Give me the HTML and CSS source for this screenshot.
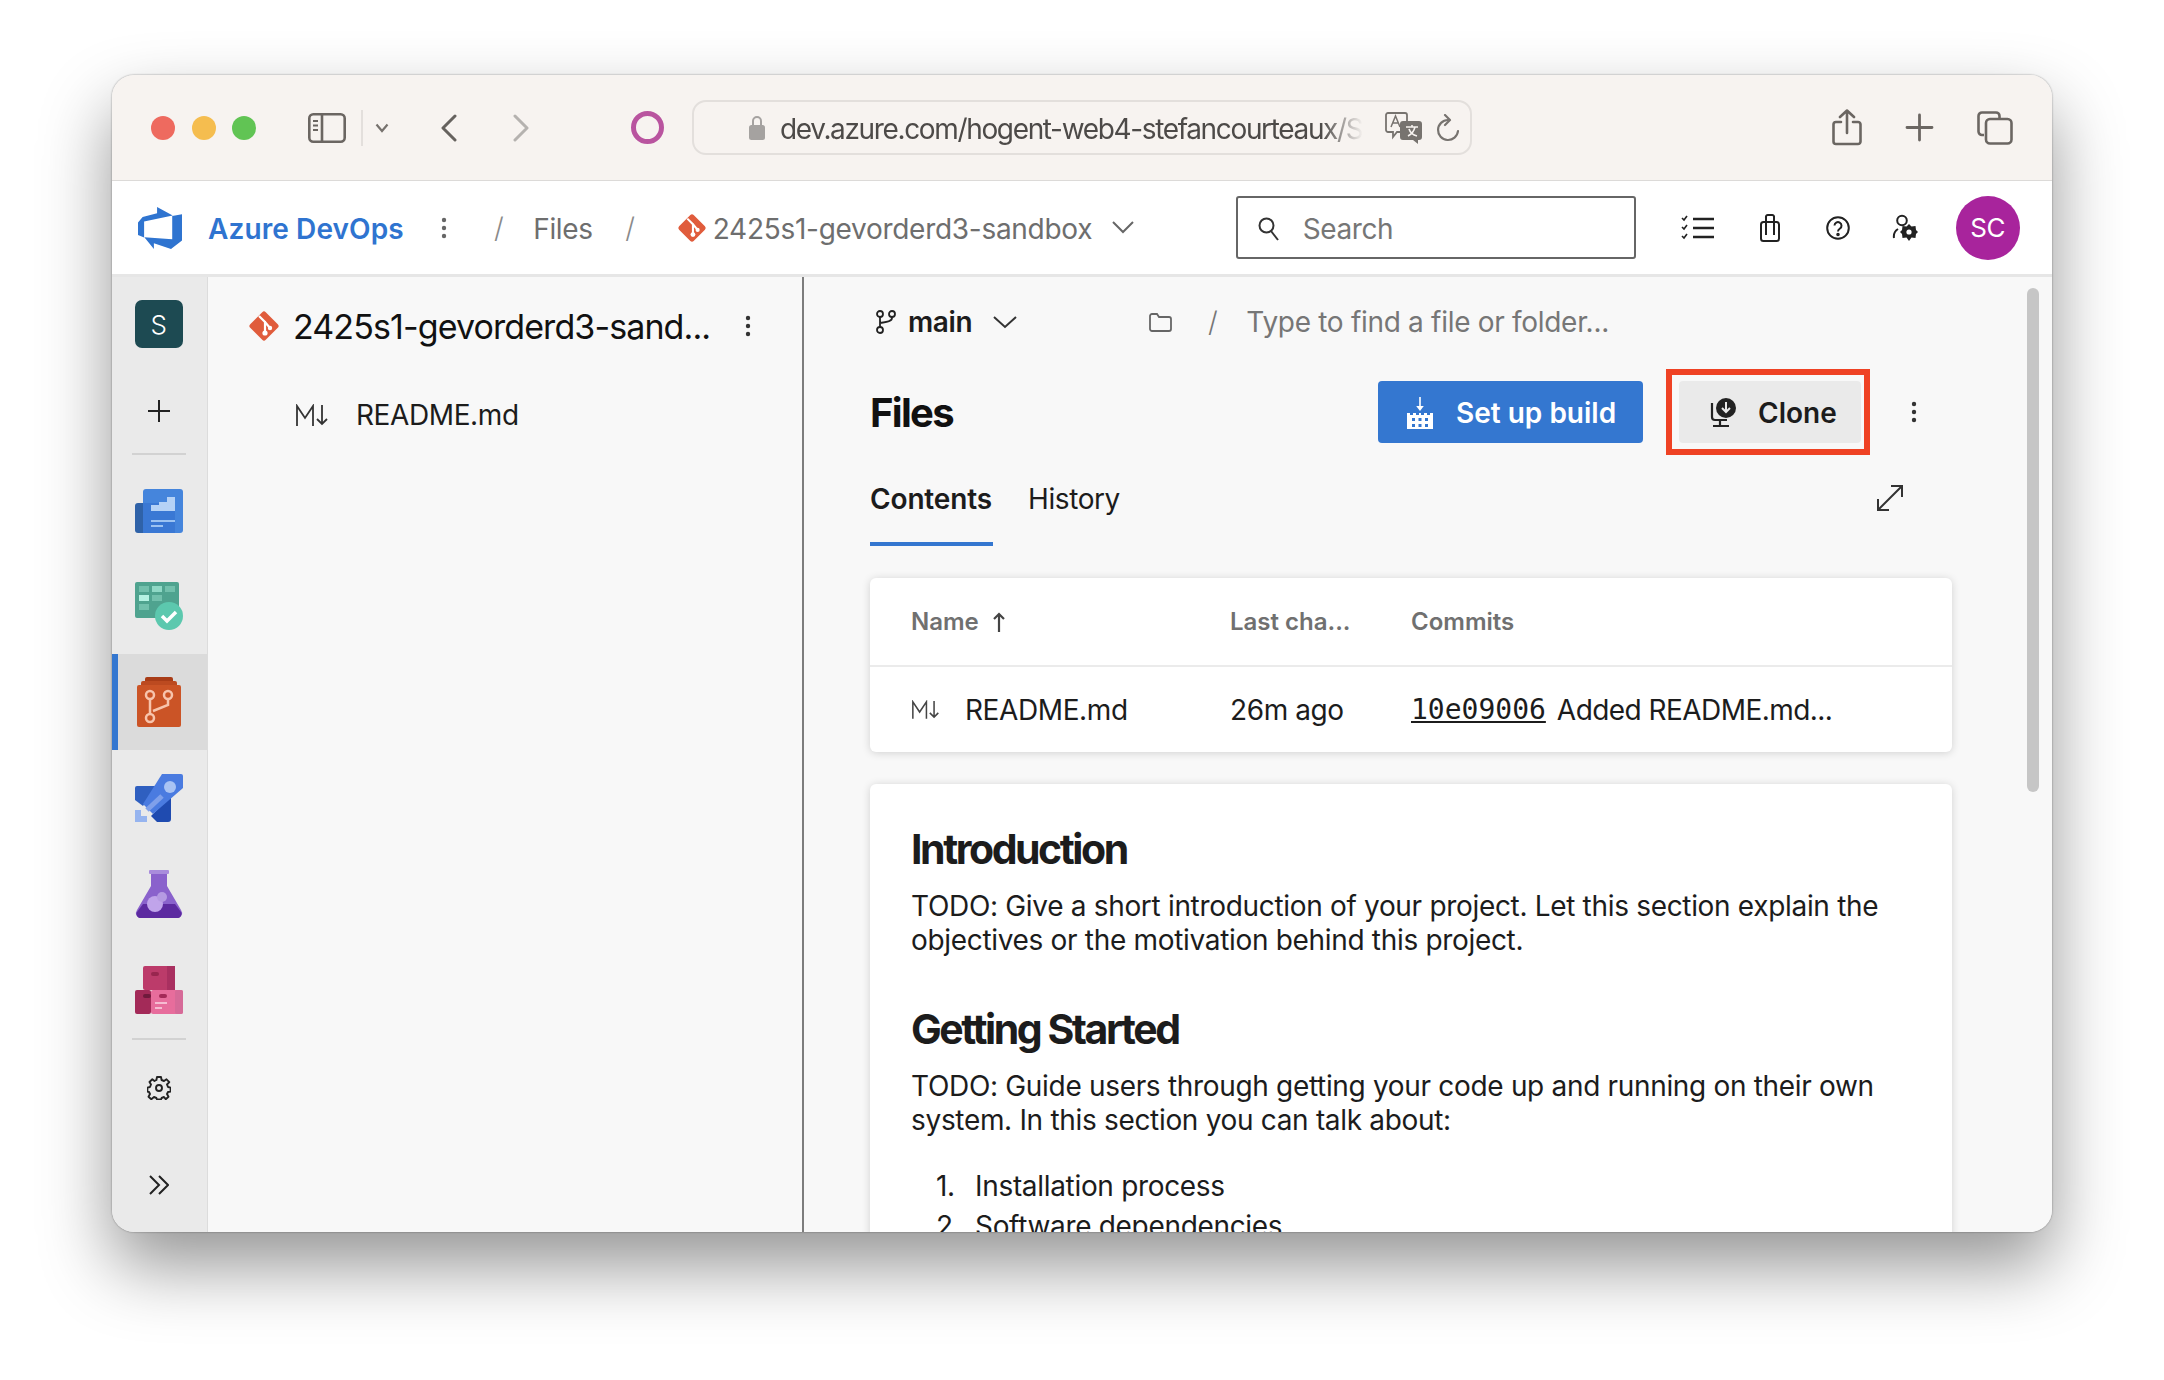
FILE: index.html
```html
<!DOCTYPE html>
<html>
  <head>
    <title>Files - Repos</title>
    <link rel="stylesheet" href="styles.css">
  </head>
  <body>
    <div class="window">
      <div class="toolbar">
        <div class="lights">
          <span class="light red"></span>
          <span class="light yellow"></span>
          <span class="light green"></span>
        </div>
        <svg class="t-sidebar" width="38" height="30" viewBox="0 0 38 30" fill="none" stroke="#6b6662" stroke-width="2.6"><rect x="1.3" y="1.3" width="35.4" height="27.4" rx="4"/><path d="M14 1.3v27.4"/><path d="M5 8h5M5 12.5h5M5 17h5" stroke-width="2"/></svg>
        <span class="t-divider"></span>
        <svg class="t-chevron" width="14" height="10" viewBox="0 0 14 10" fill="none" stroke="#77726e" stroke-width="2.2"><path d="M1.5 1.5 7 8l5.5-6.5"/></svg>
        <svg class="t-back" width="16" height="28" viewBox="0 0 16 28" fill="none" stroke="#66625e" stroke-width="3" stroke-linecap="round" stroke-linejoin="round"><path d="M14 2 2 14l12 12"/></svg>
        <svg class="t-forward" width="16" height="28" viewBox="0 0 16 28" fill="none" stroke="#b5b2af" stroke-width="3" stroke-linecap="round" stroke-linejoin="round"><path d="m2 2 12 12L2 26"/></svg>
        <span class="t-ring"></span>
        <div class="address">
          <svg class="lock" width="16" height="25" viewBox="0 0 16 25"><path d="M4 11V6a4 4 0 0 1 8 0v5" fill="none" stroke="#a5a2a0" stroke-width="2"/><rect y="10" width="16" height="15" rx="2.5" fill="#a5a2a0"/></svg>
          <span class="url">dev.azure.com/hogent-web4-stefancourteaux/Sa</span>
          <svg class="translate" width="38" height="32" viewBox="0 0 38 32"><path d="M3 1h17a2 2 0 0 1 2 2v15a2 2 0 0 1-2 2h-8l-4 5v-5H3a2 2 0 0 1-2-2V3a2 2 0 0 1 2-2z" fill="#f7f3f0" stroke="#77736f" stroke-width="1.8"/><path d="m6 15 4.500-11L15 15M8 11h5" fill="none" stroke="#77736f" stroke-width="1.500"/><path d="M18 9h16a3 3 0 0 1 3 3v13a3 3 0 0 1-3 3h-1v4l-5-4h-10a3 3 0 0 1-3-3V12a3 3 0 0 1 3-3z" fill="#77736f"/><path d="M21 15h12M27 13v2M23 24c4-2 6-5 7-9M24 17c1 3 4 6 8 7" fill="none" stroke="#f7f3f0" stroke-width="1.6"/></svg>
          <svg class="reload" width="24" height="28" viewBox="0 0 24 28" fill="none" stroke="#77736f" stroke-width="2.2" stroke-linecap="round"><path d="M12 6a10 10 0 1 0 10 11"/><path d="m9 1 5 5-5 5" stroke-linejoin="round"/></svg>
        </div>
        <svg class="t-share" width="30" height="37" viewBox="0 0 30 37" fill="none" stroke="#6b6662" stroke-width="2.6" stroke-linecap="round" stroke-linejoin="round"><path d="M9 13H4a2.5 2.5 0 0 0-2.5 2.5v17A2.5 2.5 0 0 0 4 35h22a2.5 2.5 0 0 0 2.500-2.500v-17A2.500 2.500 0 0 0 26 13h-5"/><path d="M15 24V2M8 8l7-6.500L22 8"/></svg>
        <svg class="t-plus" width="29" height="29" viewBox="0 0 29 29" stroke="#6b6662" stroke-width="2.8" stroke-linecap="round"><path d="M14.500 2v25M2 14.500h25"/></svg>
        <svg class="t-tabs" width="36" height="34" viewBox="0 0 36 34" fill="none" stroke="#6b6662" stroke-width="2.600"><path d="M7 24H5a3.500 3.500 0 0 1-3.500-3.500V5A3.500 3.500 0 0 1 5 1.500h14A3.500 3.500 0 0 1 22.500 5v2"/><rect x="9" y="8" width="25.500" height="24.500" rx="4"/></svg>
      </div>

      <div class="header">
        <svg class="logo" width="44" height="42" viewBox="0 0 18 18.400" preserveAspectRatio="none"><path fill="#2f74d0" d="M18 3.200v11.500l-4.500 3.700-7-2.500v2.500l-3.900-5.200 11.400.9V3.900zm-3.800.5L7.800 0v2.700L1.900 4.400 0 6.800v5.500l2.500 1.100V6.300z"/></svg>
        <span class="brand">Azure DevOps</span>
        <svg class="vdots h-dots" width="6" height="22" viewBox="0 0 6 22" fill="#666"><circle cx="3" cy="3" r="2.200"/><circle cx="3" cy="11" r="2.200"/><circle cx="3" cy="19" r="2.200"/></svg>
        <span class="crumb-slash first">/</span>
        <span class="crumb">Files</span>
        <span class="crumb-slash second">/</span>
        <svg class="git h-git" width="30" height="30" viewBox="0 0 32 32"><rect x="5" y="5" width="22" height="22" rx="2.500" transform="rotate(45 16 16)" fill="#e05c3c"/><path d="m11 6 6 6v11m0-11 5 6" fill="none" stroke="#fff" stroke-width="2.200"/><circle cx="17" cy="23" r="2.600" fill="#fff"/><circle cx="22" cy="18" r="2.200" fill="#fff"/></svg>
        <span class="crumb repo-crumb">2425s1-gevorderd3-sandbox</span>
        <svg class="h-chevron" width="22" height="13" viewBox="0 0 22 13" fill="none" stroke="#666" stroke-width="2"><path d="m1 1 10 10L21 1"/></svg>
        <div class="search">
          <svg width="22" height="24" viewBox="0 0 22 24" fill="none" stroke="#333" stroke-width="2"><circle cx="8.500" cy="8.500" r="7"/><path d="m13 14 7 9"/></svg>
          <span>Search</span>
        </div>
        <svg class="h-list" width="33" height="26" viewBox="0 0 33 26" fill="none" stroke="#222"><path d="M12 4h21M12 13h21M12 22h21" stroke-width="2.600"/><path d="m1 3 2 2 3-4M1 12l2 2 3-4M1 21l2 2 3-4" stroke-width="1.600"/></svg>
        <svg class="h-bag" width="20" height="28" viewBox="0 0 20 28" fill="none" stroke="#222" stroke-width="2"><rect x="1" y="8" width="18" height="19" rx="2.500"/><path d="M6 8V3.500a2 2 0 0 1 2-2.500h4a2 2 0 0 1 2 2.500V8M6 8v13M14 8v13"/></svg>
        <svg class="h-help" width="24" height="24" viewBox="0 0 24 24" fill="none" stroke="#222" stroke-width="2"><circle cx="12" cy="12" r="10.800"/><path d="M8.500 9.500a3.500 3.500 0 1 1 5.500 3c-1.500 1-2 1.500-2 3"/><circle cx="12" cy="18.500" r=".8" fill="#222"/></svg>
        <svg class="h-settings" width="26" height="28" viewBox="0 0 26 28"><circle cx="10" cy="6.500" r="4.800" fill="none" stroke="#222" stroke-width="2"/><path d="M2 24a9 9 0 0 1 4-9" fill="none" stroke="#222" stroke-width="2"/><path d="m17 10 2.500 2.500 4-.5.500 4 2 2-2 2-.5 4-4-.5L17 27l-2.500-3.500-4 .5-.5-4-2-2 2-2 .5-4 4 .5z" fill="#222"/><circle cx="17" cy="18" r="2.600" fill="#fff"/></svg>
        <span class="avatar">SC</span>
      </div>

      <div class="main">
        <div class="sidebar">
          <span class="project">S</span>
          <svg class="side-plus" width="22" height="22" viewBox="0 0 22 22" stroke="#222" stroke-width="2"><path d="M11 0v22M0 11h22"/></svg>
          <span class="side-line"></span>
          <svg class="side-boards" width="48" height="44" viewBox="0 0 48 44"><path d="M3 14h8v30H3a3 3 0 0 1-3-3V17a3 3 0 0 1 3-3z" fill="#2f62a8"/><rect x="8" width="40" height="44" rx="3" fill="#4585dc"/><rect x="8" y="14" width="32" height="30" fill="#3a78d4"/><path d="M16 22v-6h8v-3h8V8h8v14z" fill="#b5d2f6"/><rect x="16" y="31" width="24" height="2" fill="#9cc3f2"/><rect x="16" y="36" width="12" height="2" fill="#9cc3f2"/></svg>
          <svg class="side-work" width="48" height="48" viewBox="0 0 48 48"><rect width="44" height="36" rx="2" fill="#4fa38f"/><rect x="4" y="4" width="10" height="6" fill="#72c0ac"/><rect x="17" y="4" width="10" height="6" fill="#8fd8c5"/><rect x="30" y="4" width="10" height="6" fill="#72c0ac"/><rect x="4" y="13" width="10" height="6" fill="#b5f2e2"/><rect x="17" y="13" width="10" height="6" fill="#72c0ac"/><rect x="4" y="22" width="10" height="6" fill="#72c0ac"/><circle cx="34" cy="34" r="14" fill="#5cc8ae"/><path d="m27 34 5 5 9-9" fill="none" stroke="#fff" stroke-width="3.500"/></svg>
          <div class="side-active">
            <svg width="44" height="50" viewBox="0 0 44 50"><rect x="8" width="28" height="12" rx="2" fill="#a83c17"/><rect x="4" y="4" width="36" height="14" rx="2" fill="#bc4a20"/><rect y="8" width="44" height="42" rx="2" fill="#cb5426"/><g fill="none" stroke="#f7c4ac" stroke-width="2.500"><circle cx="13" cy="18" r="4"/><circle cx="31" cy="18" r="4"/><circle cx="13" cy="41" r="4"/><path d="M13 22v15M31 22v6l-15 6"/></g></svg>
          </div>
          <svg class="side-pipes" width="48" height="48" viewBox="0 0 48 48"><path d="M0 14a2 2 0 0 1 2-2h20L8 32l-8-6z" fill="#2f5fc0"/><path d="M36 22v23a3 3 0 0 1-3 3H22l-6-6z" fill="#1f4bb0"/><path d="M27 0h19a2 2 0 0 1 2 2v12L18 40 8 30z" fill="#4a7be0"/><circle cx="35" cy="13" r="6" fill="#a9c3f3"/><path d="m27 22-15 14" stroke="#7fa0ea" stroke-width="5"/><path d="M0 36h6v6h6v6H0z" fill="#96b4ef"/></svg>
          <svg class="side-test" width="48" height="48" viewBox="0 0 48 48"><rect x="14" width="20" height="4" rx="1" fill="#a98cdc"/><path d="M16 4h16v12l14 24a5 5 0 0 1-4 8H6a5 5 0 0 1-4-8l14-24z" fill="#8a62cc"/><path d="M8 34h32l6 8a4 4 0 0 1-4 6H6a4 4 0 0 1-4-6z" fill="#5c2aa0"/><circle cx="20" cy="34" r="8" fill="#c0a4ea"/><circle cx="27" cy="27" r="5" fill="#b59ae2"/></svg>
          <svg class="side-art" width="48" height="48" viewBox="0 0 48 48"><rect x="8" width="32" height="24" rx="2" fill="#bc3b6a"/><rect x="32" width="8" height="24" fill="#a93060"/><rect y="24" width="16" height="24" rx="2" fill="#a32a58"/><rect x="16" y="24" width="32" height="24" rx="2" fill="#e76d9c"/><rect x="40" y="24" width="8" height="24" rx="2" fill="#d66a98"/><rect x="16" y="6" width="8" height="4" rx="2" fill="#98264f"/><rect x="8" y="28" width="8" height="4" rx="2" fill="#6f1a3c"/><rect x="24" y="28" width="8" height="4" rx="2" fill="#a32a58"/><rect x="20" y="36" width="12" height="2" fill="#f6bcd2"/><rect x="20" y="41" width="7" height="2" fill="#f6bcd2"/></svg>
          <span class="side-line lower"></span>
          <svg class="side-gear" width="24" height="24" viewBox="0 0 24 24" fill="none" stroke="#222" stroke-width="1.900" stroke-linejoin="round"><circle cx="12" cy="12" r="3"/><path d="M10 1h4l.6 3 2.400 1 2.500-1.700 2.800 2.800L20 8.500l1 2.500 2.600.600v4L21 16l-1 2 1.500 2.700-2.800 2.500L17 21l-2.400 1-.6 1.500h-4L9.400 22 7 21l-2.700 2.200-2.800-2.500L3 18l-1-2-1.600-.4v-4L3 11l1-2.500L2.500 6l2.800-2.700L7.500 5 9.400 4z"/></svg>
          <svg class="side-expand" width="20" height="20" viewBox="0 0 20 20" fill="none" stroke="#222" stroke-width="2"><path d="m1 1 9 9-9 9M10 1l9 9-9 9"/></svg>
        </div>

        <div class="tree">
          <div class="tree-repo">
            <svg class="git" width="32" height="32" viewBox="0 0 32 32"><rect x="5" y="5" width="22" height="22" rx="2.500" transform="rotate(45 16 16)" fill="#e05c3c"/><path d="m11 6 6 6v11m0-11 5 6" fill="none" stroke="#fff" stroke-width="2.200"/><circle cx="17" cy="23" r="2.600" fill="#fff"/><circle cx="22" cy="18" r="2.200" fill="#fff"/></svg>
            <span class="tree-name">2425s1-gevorderd3-sand...</span>
            <svg width="6" height="22" viewBox="0 0 6 22" fill="#333"><circle cx="3" cy="3" r="2.200"/><circle cx="3" cy="11" r="2.200"/><circle cx="3" cy="19" r="2.200"/></svg>
          </div>
          <div class="tree-file">
            <svg class="md" width="33" height="22" viewBox="0 0 33 22" fill="none" stroke="#333" stroke-width="1.800"><path d="M1 22V2l8 12 8-12v20M26 1v19M21 15l5 5 5-5"/></svg>
            <span>README.md</span>
          </div>
        </div>

        <div class="content">
          <div class="branch-row">
            <svg class="branch-icon" width="22" height="24" viewBox="0 0 22 24" fill="none" stroke="#222" stroke-width="1.800"><circle cx="5" cy="4" r="3"/><circle cx="17" cy="4" r="3"/><circle cx="5" cy="20" r="3"/><path d="M5 7v10M17 7v1c0 3-4 4-12 5"/></svg>
            <span class="branch-name">main</span>
            <svg class="branch-chevron" width="24" height="13" viewBox="0 0 24 13" fill="none" stroke="#333" stroke-width="2"><path d="m1 1 11 10L23 1"/></svg>
            <svg class="folder" width="23" height="20" viewBox="0 0 23 20" fill="none" stroke="#666" stroke-width="1.800"><path d="M1 4a2 2 0 0 1 2-2h5l2 3h10a2 2 0 0 1 2 2v10a2 2 0 0 1-2 2H3a2 2 0 0 1-2-2z"/></svg>
            <span class="path-slash">/</span>
            <span class="path-hint">Type to find a file or folder...</span>
          </div>

          <div class="title-row">
            <h1>Files</h1>
            <button class="btn-primary">
              <svg width="30" height="32" viewBox="0 0 30 32" fill="#fff"><path d="M14.200 0h1.600v9h3l-3.800 5-3.800-5h3z"/><path d="M2 16h3v2h3v-2h3v2h3v-2h2v2h3v-2h3v2h3v-2h3v16H2z"/><g fill="#3477d0"><rect x="7" y="21" width="3" height="3"/><rect x="13.500" y="21" width="3" height="3"/><rect x="20" y="21" width="3" height="3"/><rect x="7" y="27" width="3" height="3"/><rect x="13.500" y="27" width="3" height="3"/><rect x="20" y="27" width="3" height="3"/></g></svg>
              Set up build
            </button>
            <div class="clone-mark">
              <button class="btn-clone">
                <svg width="28" height="30" viewBox="0 0 28 30"><path d="M3 5v14a3 3 0 0 0 3 3h12M11 22v6M4 28h16" fill="none" stroke="#222" stroke-width="2.200"/><circle cx="17" cy="10" r="10" fill="#222"/><path d="M17 4v9M13 10l4 4 4-4" fill="none" stroke="#eaeaea" stroke-width="2"/></svg>
                Clone
              </button>
            </div>
            <svg class="title-dots" width="6" height="22" viewBox="0 0 6 22" fill="#333"><circle cx="3" cy="3" r="2.200"/><circle cx="3" cy="11" r="2.200"/><circle cx="3" cy="19" r="2.200"/></svg>
          </div>

          <div class="tabs">
            <span class="tab active">Contents</span>
            <span class="tab">History</span>
            <svg class="tab-expand" width="26" height="26" viewBox="0 0 26 26" fill="none" stroke="#333" stroke-width="2"><path d="M1 25 25 1M1 14v11h11M14 1h11v11"/></svg>
          </div>

          <div class="card files">
            <div class="file-head">
              <span class="col-name">Name <svg width="12" height="20" viewBox="0 0 12 20" fill="none" stroke="#444" stroke-width="2.200"><path d="M6 20V2M1 7l5-5 5 5"/></svg></span>
              <span class="col-date">Last cha...</span>
              <span class="col-commit">Commits</span>
            </div>
            <div class="file-row">
              <span class="col-name">
                <svg class="md" width="28" height="19" viewBox="0 0 33 22" fill="none" stroke="#444" stroke-width="1.800"><path d="M1 22V2l8 12 8-12v20M26 1v19M21 15l5 5 5-5"/></svg>
                README.md
              </span>
              <span class="col-date">26m ago</span>
              <span class="col-commit"><a class="hash">10e09006</a><span class="message">Added README.md...</span></span>
            </div>
          </div>

          <div class="card readme">
            <h2>Introduction</h2>
            <p>TODO: Give a short introduction of your project. Let this section explain the objectives or the motivation behind this project.</p>
            <h2 class="next">Getting Started</h2>
            <p>TODO: Guide users through getting your code up and running on their own system. In this section you can talk about:</p>
            <ol>
              <li>Installation process</li>
              <li>Software dependencies</li>
            </ol>
          </div>

          <div class="scrollbar"></div>
        </div>
      </div>
    </div>
  </body>
</html>
```

FILE: styles.css
```css
* {
  box-sizing: border-box;
}

html, body {
  height: 100%;
  margin: 0;
  overflow: hidden;
}

body {
  padding: 75px 112px 0;
  background: #fff;
  font-family: Inter, "Noto Sans", sans-serif;
  font-size: 28px;
  letter-spacing: -0.4px;
  color: #1c1c1c;
}

svg {
  flex: none;
  display: block;
}

.window {
  width: 1940px;
  height: 1157px;
  border-radius: 22px;
  overflow: hidden;
  background: #f8f8f8;
  box-shadow: 0 0 2px rgba(0, 0, 0, 0.45), 0 34px 70px rgba(0, 0, 0, 0.42);
}

/* safari toolbar */
.toolbar {
  display: flex;
  align-items: center;
  height: 106px;
  padding-left: 39px;
  background: #f7f3f0;
  border-bottom: 1px solid #dcdad8;
}

.lights {
  display: flex;
  gap: 16.5px;
}

.light {
  width: 24px;
  height: 24px;
  border-radius: 50%;
}

.red { background: #ee6a5f; }
.yellow { background: #f5bd4f; }
.green { background: #61c454; }

.t-sidebar { margin-left: 52px; }

.t-divider {
  width: 2px;
  height: 36px;
  margin-left: 15px;
  background: #e3dfdc;
}

.t-chevron { margin-left: 12px; }
.t-back { margin-left: 52px; }
.t-forward { margin-left: 56px; }

.t-ring {
  width: 33px;
  height: 33px;
  margin-left: 102px;
  border: 5px solid #b9549f;
  border-radius: 50%;
}

.address {
  display: flex;
  align-items: center;
  width: 780px;
  height: 55px;
  margin-left: 28px;
  padding-left: 55px;
  border: 2px solid #e3dfdc;
  border-radius: 14px;
}

.lock { margin-right: 15px; }

.url {
  width: 583px;
  padding-top: 2px;
  overflow: hidden;
  white-space: nowrap;
  letter-spacing: -1.35px;
  color: #4d4a48;
  -webkit-mask-image: linear-gradient(90deg, #000 93%, transparent 100%);
  mask-image: linear-gradient(90deg, #000 93%, transparent 100%);
}

.translate { margin-left: 22px; }
.reload { margin-left: 13px; }

.t-share { margin-left: 360px; }
.t-plus { margin-left: 43px; }
.t-tabs { margin-left: 43px; }

/* devops header */
.header {
  display: flex;
  align-items: center;
  height: 96px;
  padding-left: 26px;
  background: #fff;
  border-bottom: 3px solid #e6e6e6;
}

.brand {
  width: 194px;
  margin-left: 26px;
  padding-top: 2px;
  font-weight: 600;
  letter-spacing: 0.1px;
  white-space: nowrap;
  color: #2f74d0;
}

.h-dots { margin-left: 39px; }

.crumb {
  padding-top: 2px;
  color: #6e6e6e;
  white-space: nowrap;
}

.crumb-slash {
  color: #8a8a8a;
  font-weight: 300;
}

.crumb-slash.first { margin-left: 47px; }
.crumb-slash.first + .crumb { width: 60px; margin-left: 30px; }
.crumb-slash.second { margin-left: 32px; }

.h-git { margin-left: 42px; }
.repo-crumb { width: 378px; margin-left: 6px; letter-spacing: -0.28px; }
.h-chevron { margin-left: 21px; }

.search {
  display: flex;
  align-items: center;
  gap: 23px;
  width: 400px;
  height: 63px;
  margin-left: 102px;
  padding-left: 20px;
  padding-top: 2px;
  border: 2px solid #666;
  border-radius: 3px;
  color: #767676;
}

.h-list { margin-left: 45px; }
.h-bag { margin-left: 46px; }
.h-help { margin-left: 46px; }
.h-settings { margin-left: 42px; }

.avatar {
  display: flex;
  align-items: center;
  justify-content: center;
  width: 64px;
  height: 64px;
  margin-left: 38px;
  border-radius: 50%;
  background: #a8249c;
  color: #fff;
  font-size: 26px;
}

/* page body */
.main {
  display: flex;
  height: 955px;
}

.sidebar {
  display: flex;
  flex-direction: column;
  align-items: center;
  flex: none;
  width: 96px;
  padding: 23px 2px 0 0;
  background: #eaeaea;
  border-right: 1px solid #dcdcdc;
}

.project {
  display: flex;
  align-items: center;
  justify-content: center;
  width: 48px;
  height: 48px;
  border-radius: 7px;
  background: #1d4a52;
  color: #fff;
  font-size: 26px;
  font-weight: 300;
}

.side-plus { margin-top: 52px; }

.side-line {
  width: 54px;
  height: 2px;
  margin-top: 31px;
  background: #d2d2d2;
}

.side-boards { margin-top: 34px; }
.side-work { margin-top: 49px; }

.side-active {
  display: flex;
  align-items: center;
  justify-content: center;
  align-self: stretch;
  height: 96px;
  margin: 24px -2px 0 0;
  padding-right: 7px;
  background: #dbdbdb;
  border-left: 6px solid #3477d0;
}

.side-pipes { margin-top: 24px; }
.side-test { margin-top: 48px; }
.side-art { margin-top: 48px; }
.side-line.lower { margin-top: 24px; }
.side-gear { margin-top: 36px; }
.side-expand { margin-top: 75px; }

.tree {
  flex: none;
  width: 596px;
  background: #f8f8f8;
  border-right: 2px solid #7d7d7d;
}

.tree-repo {
  display: flex;
  align-items: center;
  height: 98px;
  padding-left: 40px;
}

.tree-name {
  width: 452px;
  margin-left: 13px;
  font-size: 34px;
  letter-spacing: -0.9px;
  white-space: nowrap;
  color: #111;
}

.tree-file {
  display: flex;
  align-items: center;
  height: 80px;
  padding-left: 88px;
  gap: 27px;
}

.content {
  position: relative;
  flex: 1;
  padding: 0 100px 0 66px;
  overflow: hidden;
  background: #f8f8f8;
}

.scrollbar {
  position: absolute;
  top: 11px;
  right: 13px;
  width: 12px;
  height: 504px;
  border-radius: 6px;
  background: #c6c6c6;
}

.branch-row {
  display: flex;
  align-items: center;
  height: 90px;
  padding-left: 5px;
}

.branch-name {
  width: 63px;
  margin-left: 11px;
  font-weight: 600;
}

.branch-chevron { margin-left: 22px; }
.folder { margin-left: 132px; }

.path-slash {
  margin-left: 36px;
  color: #767676;
  font-weight: 300;
}

.path-hint {
  margin-left: 29px;
  letter-spacing: -0.3px;
  color: #767676;
}

.title-row {
  display: flex;
  align-items: center;
  height: 62px;
  margin-top: 14px;
}

h1 {
  flex: 1;
  margin: 0;
  font-size: 40px;
  font-weight: 700;
  letter-spacing: -1.7px;
  color: #111;
}

button {
  display: flex;
  align-items: center;
  height: 62px;
  padding-top: 2px;
  border: 0;
  border-radius: 4px;
  font-family: inherit;
  font-size: 28px;
  font-weight: 600;
  letter-spacing: 0;
}

.btn-primary {
  gap: 21px;
  width: 265px;
  padding-left: 27px;
  background: #3477d0;
  color: #fff;
}

.clone-mark {
  display: flex;
  align-items: center;
  justify-content: flex-end;
  width: 204px;
  height: 86px;
  margin-left: 23px;
  padding-right: 3px;
  border: 6px solid #ef4224;
}

.btn-clone {
  gap: 21px;
  width: 182px;
  padding-left: 30px;
  background: #eaeaea;
  color: #1c1c1c;
}

.title-dots { margin-left: 41px; margin-right: 35px; }

.tabs {
  display: flex;
  align-items: flex-start;
  gap: 35px;
  height: 103px;
  padding-top: 37px;
  line-height: 38px;
}

.tab {
  height: 66px;
}

.tab.active {
  width: 123px;
  font-weight: 600;
  letter-spacing: -0.15px;
  border-bottom: 4px solid #3477d0;
}

.tab-expand {
  margin-left: auto;
  margin-top: 5px;
  margin-right: 49px;
}

.card {
  width: 1082px;
  background: #fff;
  border-radius: 6px;
  box-shadow: 0 1px 8px rgba(0, 0, 0, 0.16);
}

.files {
  height: 174px;
  margin-top: 32px;
}

.file-head, .file-row {
  display: flex;
  align-items: center;
  padding-left: 41px;
}

.file-head {
  height: 89px;
  border-bottom: 2px solid #ebebeb;
  font-size: 24px;
  font-weight: 600;
  letter-spacing: 0;
  color: #707070;
}

.file-row {
  height: 85px;
}

.col-name {
  display: flex;
  align-items: center;
  gap: 14px;
  width: 319px;
}

.file-row .col-name { gap: 25px; }
.file-row .md { margin-left: 1px; }

.col-date {
  width: 181px;
  white-space: nowrap;
}

.col-commit {
  display: flex;
  align-items: center;
  white-space: nowrap;
}

.hash {
  font-family: "DejaVu Sans Mono", monospace;
  font-size: 28px;
  letter-spacing: 0;
  text-decoration: underline;
}

.message {
  margin-left: 11px;
  letter-spacing: -0.55px;
}

.readme {
  height: 600px;
  margin-top: 32px;
  padding: 40px 41px 0;
  line-height: 34px;
  letter-spacing: -0.32px;
}

h2 {
  margin: 0;
  font-size: 41px;
  line-height: 50px;
  font-weight: 700;
  letter-spacing: -2.45px;
}

h2.next { margin-top: 47px; }

.readme p {
  margin: 15px 0 0;
}

ol {
  margin: 32px 0 0;
  padding-left: 25px;
  list-style: none;
  counter-reset: item;
}

li {
  margin-bottom: 6px;
  counter-increment: item;
}

li::before {
  content: counter(item) ".";
  display: inline-block;
  width: 39px;
}
```
